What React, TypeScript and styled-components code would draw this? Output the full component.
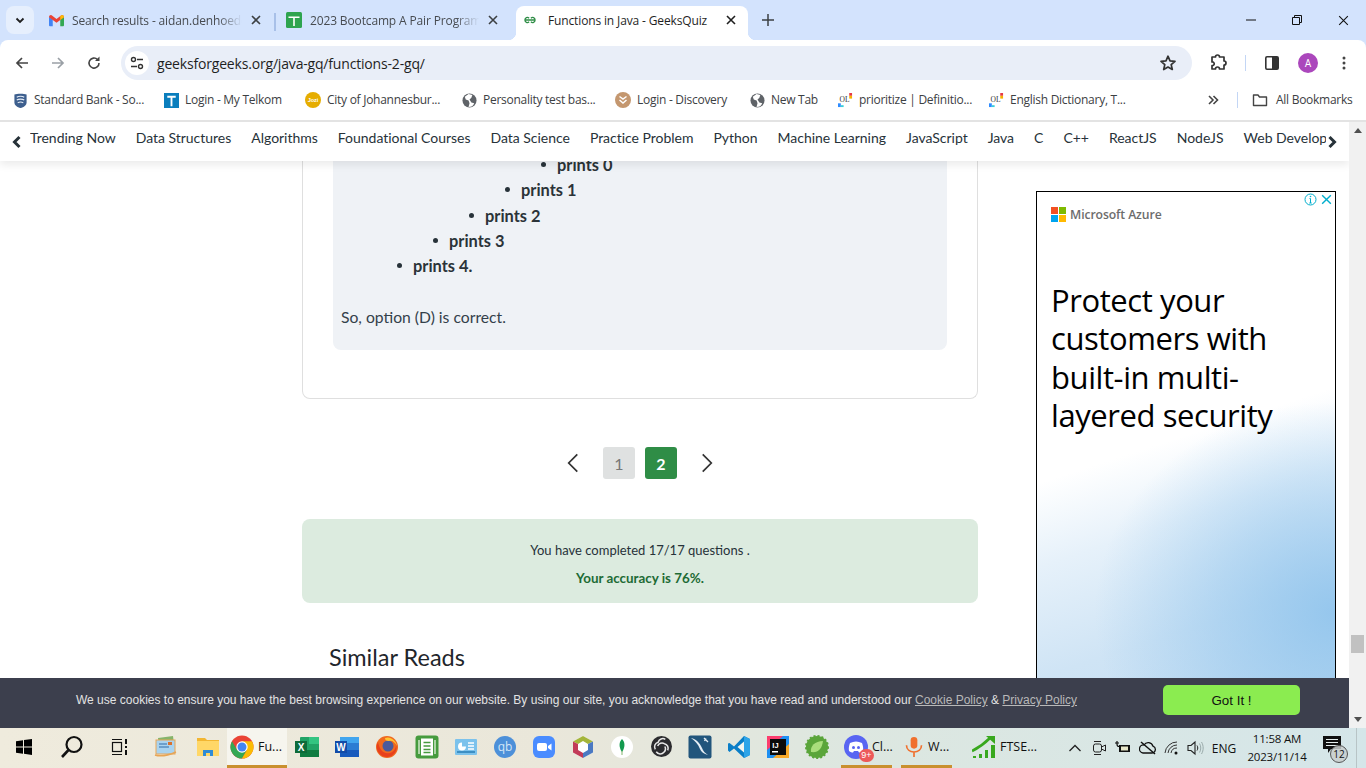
import React from "react";
import styled, { createGlobalStyle } from "styled-components";

const Global = createGlobalStyle`
  html, body { margin: 0; padding: 0; height: 100%; overflow: hidden; background: #fff; }
  #root { height: 100%; }
  * { box-sizing: border-box; }
`;

const Shell = styled.div`
  width: 1366px; height: 768px; display: flex; flex-direction: column; overflow: hidden;
  font-family: "Roboto", "Liberation Sans", sans-serif; color: #1f1f1f;
`;

/* ---------- tab strip ---------- */
const TabStrip = styled.div`
  height: 40px; flex: none; background: #d3e3fd; display: flex; align-items: flex-end; padding-left: 6px;
`;
const TabMenu = styled.div`
  width: 28px; height: 28px; margin: 0 6px 6px 0; border-radius: 8px; background: #e6effd;
  display: flex; align-items: center; justify-content: center;
`;
const Tab = styled.div<{ $w: number; $active?: boolean; $pad: number; $gap: number; $pr: number }>`
  position: relative; width: ${p => p.$w}px; height: 34px; display: flex; align-items: center;
  padding: 0 ${p => p.$pr}px 6px ${p => p.$pad}px; gap: ${p => p.$gap}px; border-radius: 8px 8px 0 0;
  background: ${p => (p.$active ? "#fff" : "transparent")};
  ${p => p.$active && `
    &::before, &::after { content: ""; position: absolute; bottom: 0; width: 8px; height: 8px; }
    &::before { left: -8px; background: radial-gradient(circle at 0 0, #d3e3fd 8px, #fff 8.5px); }
    &::after { right: -8px; background: radial-gradient(circle at 100% 0, #d3e3fd 8px, #fff 8.5px); }
  `}
`;
const TabTitle = styled.div<{ $fade?: boolean }>`
  flex: 1; min-width: 0; white-space: nowrap; overflow: hidden; font-size: 12px; color: ${p => (p.$fade ? "#474b50" : "#1f1f1f")};
  font-family: "Open Sans", sans-serif; letter-spacing: -0.14px;
  ${p => p.$fade && `mask-image: linear-gradient(90deg, #000 86%, transparent 100%);`}
`;
const TabDivider = styled.div`
  width: 2px; height: 18px; background: #a8c0e8; margin: 0 1px 9px 0; flex: none;
`;
const NewTab = styled.div`
  width: 20px; height: 34px; margin-left: 10px; padding-bottom: 6px; display: flex; align-items: center; justify-content: center;
`;
const WindowControls = styled.div`
  margin-left: auto; display: flex; height: 40px;
`;
const WindowButton = styled.div`
  width: 46px; display: flex; align-items: center; justify-content: center;
`;

/* ---------- toolbar ---------- */
const Backdrop = styled.div`
  background: #d3e3fd; flex: none;
`;
const Toolbar = styled.div`
  height: 40px; background: #fff; display: flex; align-items: flex-start; padding: 6px 4px 0; border-radius: 8px 8px 0 0;
`;
const ToolButton = styled.div`
  width: 36px; height: 34px; flex: none; display: flex; align-items: center; justify-content: center;
`;
const Omnibox = styled.div`
  flex: 1; height: 34px; margin: 0 8px 0 9px; border-radius: 17px; background: #e9eef8;
  display: flex; align-items: center; padding: 0 15px 0 4px;
`;
const SiteChip = styled.div`
  width: 24px; height: 24px; border-radius: 50%; background: #fff; display: flex; align-items: center; justify-content: center;
`;
const Url = styled.div`
  flex: 1; margin-left: 8px; font-size: 14px; font-family: "Open Sans", sans-serif; letter-spacing: -0.18px; color: #1f1f1f;
`;
const ToolDivider = styled.div`
  width: 1px; height: 16px; background: #c3d6f5; margin: 9px 8px 0 9px; flex: none;
`;
const Avatar = styled.div`
  width: 20px; height: 20px; border-radius: 50%; background: #ab47bc; color: #fff; font-size: 10px;
  display: flex; align-items: center; justify-content: center;
`;

/* ---------- bookmarks ---------- */
const Bookmarks = styled.div`
  height: 42px; flex: none; background: #fff; border-bottom: 2px solid #e3e3e3; display: flex; align-items: center;
  padding: 0 14px 0 13px; gap: 19px; font-size: 12px; color: #3c4043;
`;
const Bookmark = styled.div<{ $gap?: number }>`
  display: flex; align-items: center; gap: ${p => p.$gap ?? 6}px; white-space: nowrap;
`;
const BookmarkLabel = styled.span<{ $w: number }>`
  display: block; width: ${p => p.$w}px; padding-bottom: 2px; font-family: "Open Sans", sans-serif; font-size: 12px; letter-spacing: -0.27px; white-space: nowrap;
`;
const BookmarkEnd = styled.div`
  margin-left: auto; display: flex; align-items: center;
`;
const MoreMark = styled.div`
  width: 16px; display: flex; justify-content: center; margin-right: 16px;
`;
const BookmarkDivider = styled.div`
  width: 1px; height: 16px; background: #c3d6f5; margin-right: 14px;
`;

/* ---------- page ---------- */
const Viewport = styled.div`
  position: relative; flex: 1; min-height: 0; display: flex; background: #fff;
`;
const PageArea = styled.div`
  flex: 1; min-width: 0; display: flex; flex-direction: column; overflow: hidden;
`;
const SiteNav = styled.nav`
  position: relative; z-index: 2; flex: none; height: 39px; background: #fff; display: flex; align-items: center;
  padding-left: 10px; box-shadow: 0 4px 8px rgba(0, 0, 0, 0.08); overflow: hidden;
  font-family: "Lato", sans-serif; font-size: 14px; color: #273239;
`;
const NavArrow = styled.div<{ $right?: boolean }>`
  flex: none; width: 14px; height: 16px; display: flex; align-items: center; justify-content: center; margin-right: 6px;
  ${p => p.$right && `position: absolute; right: 10px; top: 12px; margin: 0;`}
`;
const NavItems = styled.div`
  display: flex; gap: 20px; white-space: nowrap; width: 1296px; overflow: hidden; padding-bottom: 9px;
`;
const NavItem = styled.span`
  flex: none; letter-spacing: -0.02px;
`;
const Content = styled.div`
  flex: 1; min-height: 0; display: flex; padding-left: 302px; overflow: hidden;
`;
const MainColumn = styled.div`
  width: 676px; flex: none; display: flex; flex-direction: column;
`;
const QuestionCard = styled.section`
  height: 238px; flex: none; border: 1px solid #dfdfdf; border-top: none; border-radius: 0 0 8px 8px; padding: 0 30px;
`;
const Explanation = styled.div`
  display: flow-root; height: 189px; background: #eff2f6; border-radius: 0 0 8px 8px; padding: 0 8px;
  font-family: "Lato", sans-serif; font-size: 16px; color: #273239;
`;
const Bullets = styled.ul<{ $top?: boolean }>`
  margin: 0; padding: 0 0 0 36px; list-style: none;
  ${p => p.$top && `padding-left: 72px; margin-top: -9px; height: 126.5px;`}
`;
const Bullet = styled.li`
  position: relative; height: 25.3px; line-height: 25.3px; font-weight: 700; font-size: 16.4px; color: #2b3338;
  &::before { content: ""; position: absolute; left: -16.5px; top: 10px; width: 5px; height: 5px; border-radius: 50%; background: #273239; }
`;
const Verdict = styled.p`
  margin: 27px 0 0; line-height: 22px; font-size: 15.7px; color: #33404a;
`;
const Pager = styled.div`
  display: flex; align-items: center; justify-content: center; height: 32px; margin-top: 48px; flex: none;
`;
const PagerArrow = styled.div`
  width: 50px; height: 32px; display: flex; align-items: center; justify-content: center;
`;
const PageNumber = styled.div<{ $current?: boolean }>`
  width: 32px; height: 32px; margin: 0 5px; border-radius: 3px; display: flex; align-items: center; justify-content: center;
  font-family: "Lato", sans-serif; font-size: 16px; font-weight: ${p => (p.$current ? 700 : 400)};
  background: ${p => (p.$current ? "#2f8d46" : "#dfe1e1")}; color: ${p => (p.$current ? "#fff" : "#777")};
`;
const Score = styled.div`
  margin-top: 40px; height: 84px; flex: none; background: #dcebdf; border-radius: 8px; text-align: center;
  font-family: "Lato", sans-serif; font-size: 13px; color: #273239; padding-top: 22px;
`;
const ScoreLine = styled.div<{ $strong?: boolean }>`
  height: 28px; line-height: 19px;
  ${p => p.$strong && `font-weight: 700; color: #1e6b35; font-size: 13.4px;`}
`;
const SimilarTitle = styled.h2`
  margin: 39px 0 0 27px; font-family: "Lato", sans-serif; font-weight: 400; font-size: 23.5px; line-height: 30px; color: #1f262b;
`;
const AdFrame = styled.aside`
  position: relative; flex: none; width: 300px; height: 600px; margin: 30px 0 0 58px; border: 1px solid #000; padding: 14px 0 0 14px;
  background:
    radial-gradient(ellipse 240px 210px at 100% 420px, rgba(140, 194, 236, 0.85) 0%, rgba(140, 194, 236, 0.45) 50%, rgba(140, 194, 236, 0) 100%),
    linear-gradient(162deg, #fff 0%, #fff 42%, #e6f1fa 54%, #cfe4f5 70%, #bcd9f1 100%);
  font-family: "Open Sans", sans-serif;
`;
const AdChoices = styled.div`
  position: absolute; top: 1px; right: 2px; display: flex; gap: 3px;
`;
const AdBrand = styled.div`
  display: flex; align-items: center; gap: 4px; color: #6c6c6c; font-size: 12.2px; letter-spacing: -0.1px; font-weight: 600;
`;
const AdHeadline = styled.div`
  margin-top: 58px; font-size: 31px; line-height: 38.4px; color: #000; letter-spacing: -0.42px; font-weight: 500;
`;
const CookieBar = styled.div`
  position: absolute; z-index: 3; left: 0; right: 17px; bottom: 0; height: 50px; background: #3c3f4d; display: flex; align-items: center;
  padding: 0 49px 6px 76px; font-family: "Liberation Sans", sans-serif; font-size: 12px; color: #e2e2e2;
`;
const CookieText = styled.div`
  flex: 1; white-space: nowrap;
`;
const CookieLink = styled.span`
  color: #b9b9b9; text-decoration: underline;
`;
const GotIt = styled.div`
  width: 137px; height: 30px; border-radius: 5px; background: #8bec50; color: #111; font-size: 13.33px;
  display: flex; align-items: center; justify-content: center;
`;
const Scrollbar = styled.div`
  width: 17px; flex: none; background: #f1f1f1; display: flex; flex-direction: column; align-items: center; padding-top: 2px;
`;
const ScrollThumb = styled.div`
  width: 13px; height: 18px; background: #c1c1c1; margin-top: 502px;
`;
const ScrollEnd = styled.div<{ $down?: boolean }>`
  width: 0; height: 0; border-left: 4px solid transparent; border-right: 4px solid transparent;
  ${p => (p.$down ? `border-top: 5px solid #505050; margin-top: 64px;` : `border-bottom: 5px solid #505050; margin-top: 4px;`)}
`;

/* ---------- taskbar ---------- */
const Taskbar = styled.div`
  height: 40px; flex: none; display: flex; align-items: stretch;
  background: linear-gradient(90deg, #efebdd 0%, #eae7da 40%, #dde7e0 62%, #d5e6e9 100%);
  font-family: "Open Sans", sans-serif; font-size: 12px; color: #111;
`;
const TaskSlot = styled.div<{ $w: number; $ml?: number; $active?: boolean; $open?: boolean; $left?: boolean }>`
  position: relative; flex: none; width: ${p => p.$w}px; margin-left: ${p => p.$ml ?? 0}px; display: flex; align-items: center; gap: 4px;
  justify-content: ${p => (p.$left ? "flex-start" : "center")}; padding-left: ${p => (p.$left ? 3 : 0)}px;
  background: ${p => (p.$active ? "#f6f5ee" : "transparent")};
  border-bottom: ${p => (p.$active || p.$open ? "3px solid #c9902f" : "3px solid transparent")};
`;
const TaskLabel = styled.span`
  font-size: 12.5px; white-space: nowrap;
`;
const Tray = styled.div`
  margin-left: auto; display: flex; align-items: stretch;
`;
const TraySlot = styled.div<{ $w: number }>`
  width: ${p => p.$w}px; display: flex; align-items: center; justify-content: center; flex: none;
`;
const Clock = styled.div`
  width: 70px; display: flex; flex-direction: column; align-items: center; justify-content: center; gap: 2px; font-size: 11.5px; line-height: 16px; letter-spacing: -0.2px;
`;
const ShowDesktop = styled.div`
  width: 10px; border-left: 1px solid #b8c4c6;
`;
const NotifyWrap = styled.div`
  position: relative; width: 22px; height: 24px;
`;
const NotifyCount = styled.span`
  position: absolute; right: -3px; bottom: -3px; width: 18px; height: 18px; border-radius: 50%; background: rgba(200,205,205,.85);
  border: 1px solid #555; font-size: 10px; display: flex; align-items: center; justify-content: center; color: #111;
`;

/* ---------- drawings ---------- */
const I = ({ s = 24, vb = "0 0 24 24", children }: { s?: number; vb?: string; children: React.ReactNode }) => (
  <svg width={s} height={s} viewBox={vb} fill="none">{children}</svg>
);
const Gmail = () => (
  <I s={15} vb="0 0 16 16">
    <path d="M0 4v9a1 1 0 0 0 1 1h3V7z" fill="#4285f4" />
    <path d="M16 4v9a1 1 0 0 1-1 1h-3V7z" fill="#34a853" />
    <path d="M0 4.500C0 2.500 2 1.500 3.500 2.800L8 6.500l4.500-3.700C14 1.500 16 2.500 16 4.500L12 7.500 8 10.500 4 7.500z" fill="#ea4335" />
    <path d="M12 3.200 12.500 2.800C14 1.500 16 2.500 16 4.500L12 7.500z" fill="#fbbc04" />
  </I>
);
const SheetFav = () => (
  <I s={16} vb="0 0 16 16">
    <rect x="0" y="0" width="16" height="16" rx="1.500" fill="#2ea44f" />
    <path d="M2.500 4.500h11v1.600H8.800V14H7.200V6.100H2.500z" fill="#fff" />
  </I>
);
const GfgFav = () => (
  <I s={12} vb="0 0 16 16">
    <path d="M1 8h14M1.200 8a3.300 3.300 0 0 1 5.600-2.400M14.800 8a3.300 3.300 0 0 0-5.600-2.400M1.200 8a3.300 3.300 0 0 0 5.600 2.400M14.800 8a3.300 3.300 0 0 1-5.600 2.400" stroke="#2f8d46" strokeWidth="1.700" />
  </I>
);
const Cross = ({ s = 12, c = "#3c4043", w = 1.600 }: { s?: number; c?: string; w?: number }) => (
  <I s={s} vb="0 0 12 12"><path d="M2 2l8 8M10 2l-8 8" stroke={c} strokeWidth={w} /></I>
);
const Arrow = ({ c, back }: { c: string; back?: boolean }) => (
  <I s={16} vb="0 0 16 16">
    <path d={back ? "M14 8H3M8 3 3 8l5 5" : "M2 8h11M8 3l5 5-5 5"} stroke={c} strokeWidth="1.700" />
  </I>
);
const Reload = () => (
  <I s={16} vb="0 0 16 16">
    <path d="M13 8a5 5 0 1 1-1.500-3.500" stroke="#444" strokeWidth="1.600" />
    <path d="M13.500 1.500V6H9z" fill="#444" />
  </I>
);
const Tune = () => (
  <I s={16} vb="0 0 16 16">
    <circle cx="4.500" cy="4.500" r="2" stroke="#333" strokeWidth="1.400" />
    <path d="M8 4.500h6M2 11.500h6" stroke="#333" strokeWidth="1.400" />
    <circle cx="11.500" cy="11.500" r="2" stroke="#333" strokeWidth="1.400" />
  </I>
);
const Star = () => (
  <I s={18} vb="0 0 18 18">
    <path d="M9 2.200l2 4.600 5 .5-3.800 3.300 1.100 4.900L9 13l-4.300 2.500 1.100-4.900L2 7.300l5-.5z" stroke="#333" strokeWidth="1.700" strokeLinejoin="round" />
  </I>
);
const Puzzle = () => (
  <I s={18} vb="0 0 18 18">
    <path d="M3 4h3.500a2 2 0 1 1 4 0H15v4a2 2 0 1 1 0 4v4H10.500a2 2 0 0 0-4 0H3v-3.500a1.800 1.800 0 1 0 0-3.500z" stroke="#333" strokeWidth="1.700" strokeLinejoin="round" transform="translate(0 -1)" />
  </I>
);
const SidePanel = () => (
  <I s={16} vb="0 0 16 16">
    <rect x="1.800" y="1.800" width="12.400" height="12.400" rx="1.200" stroke="#333" strokeWidth="1.600" />
    <rect x="8" y="2" width="6" height="12" fill="#333" />
  </I>
);
const Kebab = () => (
  <I s={16} vb="0 0 16 16">
    <circle cx="8" cy="3" r="1.500" fill="#444" /><circle cx="8" cy="8" r="1.500" fill="#444" /><circle cx="8" cy="13" r="1.500" fill="#444" />
  </I>
);
const Bank = () => (
  <I s={15} vb="0 0 16 16">
    <path d="M1.500 1.500C4 .5 12 .5 14.500 1.500V10c0 3-3 5-6.500 6-3.500-1-6.500-3-6.500-6z" fill="#3d5f8e" />
    <path d="M4 4.500c2-1.300 6-1.300 8 0M4 7.500c2-1.300 6-1.300 8 0M5 10.500c2-1.300 4-1.300 6 0" stroke="#e6edf6" strokeWidth="1.100" />
  </I>
);
const Telkom = () => (
  <I s={15} vb="0 0 16 16">
    <rect width="16" height="16" fill="#0a7ebd" />
    <path d="M3.500 3h9v2H9v9H7V5H3.500z" fill="#fff" />
  </I>
);
const Jozi = () => (
  <I s={16} vb="0 0 16 16">
    <circle cx="8" cy="8" r="8" fill="#e6ad00" />
    <text x="8" y="10.200" fontSize="5.500" fontWeight="700" fill="#fff" textAnchor="middle" fontFamily="Liberation Sans">Jozi</text>
  </I>
);
const Globe = () => (
  <I s={15} vb="0 0 16 16">
    <circle cx="8" cy="8" r="7.500" fill="#5f6368" />
    <path d="M7 1 3 4l1 3 3 1 1 3-1 4c3 0 5-1 6-4l-3-1-2-3 2-2 1-3z" fill="#fff" />
  </I>
);
const Discovery = () => (
  <I s={16} vb="0 0 16 16">
    <circle cx="8" cy="8" r="8" fill="#c4976f" />
    <path d="M4.500 4.500 8 7l3.500-2.500M4.500 8 8 11l3.500-3" stroke="#fff" strokeWidth="1.500" />
  </I>
);
const Oxford = () => (
  <I s={15} vb="0 0 16 16">
    <rect x="0" y="11" width="3" height="4" fill="#2f8cff" />
    <rect x="3" y="13" width="3" height="2" fill="#38d0d8" />
    <rect x="12" y="0" width="3" height="3" fill="#e63946" />
    <rect x="12" y="3" width="3" height="3" fill="#f5b301" />
    <text x="7" y="10" fontSize="8" fill="#333" textAnchor="middle" fontFamily="Liberation Serif">OL</text>
  </I>
);
const MoreChevrons = () => (
  <I s={12} vb="0 0 12 12"><path d="M2 2l4 4-4 4M6.500 2l4 4-4 4" stroke="#444" strokeWidth="1.600" /></I>
);
const Folder = () => (
  <I s={16} vb="0 0 16 16"><path d="M1.500 3h4.500l1.500 2h7v8.500h-13z" stroke="#444" strokeWidth="1.400" strokeLinejoin="round" /></I>
);
const Chevron = ({ right, s = 14, c = "#273239", w = 3 }: { right?: boolean; s?: number; c?: string; w?: number }) => (
  <I s={s} vb="0 0 14 14"><path d={right ? "M4.500 2l5 5-5 5" : "M9.500 2l-5 5 5 5"} stroke={c} strokeWidth={w} /></I>
);
const ChevronDown = () => (
  <I s={12} vb="0 0 12 12"><path d="M2.500 4.500 6 8l3.500-3.500" stroke="#1f1f1f" strokeWidth="1.800" /></I>
);
const Windows = () => (
  <I s={16} vb="0 0 16 16"><path d="M0 2.200 7 1.200V7.500H0zM8 1l8-1v7.500H8zM0 8.500h7v6.300l-7-1zM8 8.500h8V16l-8-1.200z" fill="#000" /></I>
);
const Search = () => (
  <I s={24}><circle cx="14" cy="9.500" r="7.500" stroke="#111" strokeWidth="2.200" /><path d="M8.500 15 2 22" stroke="#111" strokeWidth="2.600" /></I>
);
const TaskView = () => (
  <I s={18} vb="0 0 18 18">
    <path d="M1 1.500h10M1 16.500h10" stroke="#111" strokeWidth="1.200" />
    <rect x="1.500" y="4.500" width="9" height="9" stroke="#111" strokeWidth="1.200" />
    <path d="M15 1v5M15 8v2M15 12v5" stroke="#111" strokeWidth="2" />
  </I>
);
const Mail = () => (
  <I s={24}>
    <path d="M4 3 19 1l2 16-15 2z" fill="#86b46a" />
    <rect x="2" y="5" width="19" height="14" fill="#a9d3ef" stroke="#e7a556" strokeWidth="1" />
    <path d="M5 9h8M5 12h10" stroke="#5a8fc0" strokeWidth="1.400" />
    <rect x="14" y="7" width="4" height="3" fill="#d9702e" />
    <path d="M1 20c6 2 14 0 21-3" stroke="#e7a556" strokeWidth="1.500" />
  </I>
);
const Explorer = () => (
  <I s={22} vb="0 0 22 22">
    <path d="M0 2h8l2 2H22v15H0z" fill="#f2b632" />
    <rect y="5" width="22" height="15" fill="#ffd767" />
    <path d="M6 20v-6h10v6h-3v-3H9v3z" fill="#2f8bd6" />
  </I>
);
const Chrome = () => (
  <I s={24}>
    <circle cx="12" cy="12" r="11.500" fill="#ea4335" />
    <path d="M2.040 6.250A11.500 11.500 0 0 0 12 23.500l4.760-8.250H7.240z" fill="#34a853" />
    <path d="M21.960 6.250A11.500 11.500 0 0 1 12 23.500l4.760-8.250L12 6.250z" fill="#fbbc04" />
    <circle cx="12" cy="12" r="5.700" fill="#fff" />
    <circle cx="12" cy="12" r="4.500" fill="#4285f4" />
  </I>
);
const Excel = () => (
  <I s={24}>
    <rect x="5" y="2" width="19" height="20" rx="1" fill="#21a366" />
    <rect x="14" y="2" width="10" height="7" fill="#33c481" />
    <rect x="5" y="15" width="19" height="7" fill="#107c41" />
    <rect x="0" y="6" width="12" height="12" fill="#0e6b3a" />
    <text x="6" y="15.500" fontSize="10" fontWeight="700" fill="#fff" textAnchor="middle" fontFamily="Liberation Sans">X</text>
  </I>
);
const Word = () => (
  <I s={24}>
    <rect x="5" y="2" width="19" height="20" rx="1" fill="#2b7cd3" />
    <rect x="5" y="2" width="19" height="6" fill="#41a5ee" />
    <rect x="5" y="15" width="19" height="7" fill="#185abd" />
    <rect x="0" y="6" width="12" height="12" fill="#124ba8" />
    <text x="6" y="15.500" fontSize="10" fontWeight="700" fill="#fff" textAnchor="middle" fontFamily="Liberation Sans">W</text>
  </I>
);
const Firefox = () => (
  <I s={24}>
    <circle cx="12" cy="12" r="11" fill="#f0691f" />
    <circle cx="13" cy="11" r="5.500" fill="#4a5a9c" />
    <path d="M3 7c1 6 5 13 12 11 3-1 6-4 6-8 2 5-2 12-9 12S-1 14 3 7z" fill="#e8401c" />
    <path d="M10 3c5-2 11 2 12 8-2-4-5-6-8-5-3 0-4-1-4-3z" fill="#ffc533" />
  </I>
);
const Evernote = () => (
  <I s={24}>
    <rect x="0.500" y="0.500" width="23" height="23" rx="3" fill="#469b3e" />
    <rect x="6" y="3.500" width="12" height="17" fill="#fff" />
    <path d="M4 5v14M20 5v14" stroke="#cfe8c9" strokeWidth="1.500" />
    <path d="M8.500 7.500h7M8.500 11h7M8.500 14.500h7M8.500 17.500h7" stroke="#469b3e" strokeWidth="1.600" />
  </I>
);
const Dashboard = () => (
  <I s={24}>
    <rect x="1" y="4" width="22" height="16" rx="1" fill="#7cc2ec" />
    <path d="M8 7.500a4 4 0 1 0 4 4H8z" fill="#fff" />
    <path d="M14 8h6M14 11h6M14 14h6" stroke="#fff" strokeWidth="1.500" />
    <rect x="3" y="16" width="18" height="2" fill="#3d8fc4" />
  </I>
);
const Qb = () => (
  <I s={22} vb="0 0 22 22">
    <circle cx="11" cy="11" r="11" fill="#4d90d9" />
    <text x="11" y="15" fontSize="12" fill="#d5e6f7" textAnchor="middle" fontFamily="Open Sans">qb</text>
  </I>
);
const Zoom = () => (
  <I s={22} vb="0 0 22 22">
    <rect width="22" height="22" rx="6" fill="#4a8cff" />
    <rect x="4" y="7" width="10" height="8" rx="2" fill="#fff" />
    <path d="M15 10l3.500-2.500v7L15 12z" fill="#fff" />
  </I>
);
const Hexa = () => (
  <I s={22} vb="0 0 22 22">
    <path d="M11 0 21 5.500v11L11 22 1 16.500v-11z" fill="#fff" />
    <path d="M11 0 21 5.500 16 8 11 5 6 8 1 5.500z" fill="#a4b53a" />
    <path d="M21 5.500v11L11 22v-5l5-3V8z" fill="#4b79c2" />
    <path d="M1 5.500v11L11 22v-5l-5-3V8z" fill="#c23b58" />
  </I>
);
const Mongo = () => (
  <I s={22} vb="0 0 22 22">
    <circle cx="11" cy="11" r="11" fill="#fff" />
    <path d="M11 3c3 3 3.500 8 0 13-3.500-5-3-10 0-13z" fill="#139a4e" />
    <path d="M11 15v4" stroke="#82b36d" strokeWidth="1" />
  </I>
);
const Obs = () => (
  <I s={21} vb="0 0 22 22">
    <circle cx="11" cy="11" r="11" fill="#2b2b2e" />
    <path d="M15 3.500a5 5 0 0 0-7.500 3 5 5 0 0 0-3 7.500M17.500 15a5 5 0 0 0-3.500-7 5 5 0 0 0-7 2.500M5.500 16.500a5 5 0 0 0 8 .5 5 5 0 0 0 1-6" stroke="#e8e8e8" strokeWidth="1.600" />
  </I>
);
const MySql = () => (
  <I s={24}>
    <rect x="0.500" y="0.500" width="23" height="23" rx="2" fill="#21557c" />
    <path d="M3 3c5 1 9 5 11 10 1 3 3 5 6 7-4-1-7-3-8-6C10 9 7 6 3 3z" fill="#e5eef5" />
    <path d="M16 3l4 4M18 3.500 16.500 6" stroke="#e5eef5" strokeWidth="1.300" />
  </I>
);
const VsCode = () => (
  <I s={24}>
    <path d="M17 1l6 3v16l-6 3-10-9.500-4.500 3.500L1 15.500V8.500L2.500 8 7 11.500z" fill="#0a7ec7" />
    <path d="M17 1l6 3v16l-6 3z" fill="#2ea4e8" />
    <path d="M17 6.500 10.500 12l6.500 5.500z" fill="#f3f5f0" />
  </I>
);
const IntelliJ = () => (
  <I s={22} vb="0 0 22 22">
    <rect width="22" height="22" fill="#1d8ff2" />
    <path d="M0 0h16L0 14z" fill="#fc3d6e" />
    <path d="M22 22H6l16-14z" fill="#f8a928" />
    <rect x="3" y="3" width="16" height="16" fill="#0a0a0a" />
    <text x="8.500" y="11.500" fontSize="7.500" fontWeight="700" fill="#fff" textAnchor="middle" fontFamily="Liberation Sans">IJ</text>
    <rect x="5" y="15" width="6" height="1.500" fill="#fff" />
  </I>
);
const Spring = () => (
  <I s={24}>
    <circle cx="12" cy="12" r="11" fill="#5aa53a" stroke="#5aa53a" strokeWidth="2" strokeDasharray="2 2" />
    <path d="M6 17c-1-6 4-11 12-11-1 8-5 12-12 11z" fill="#a9de7c" />
  </I>
);
const Discord = () => (
  <I s={24}>
    <circle cx="12" cy="12" r="12" fill="#5865f2" />
    <path d="M6 8c4-2 8-2 12 0 1 3 1.500 5 1 8-1.500 1-3 1.500-4 1.500l-1-1.500h-4L9 17.500C8 17.500 6.500 17 5 16c-.5-3 0-5 1-8z" fill="#fff" />
    <circle cx="9.500" cy="12.500" r="1.500" fill="#5865f2" /><circle cx="14.500" cy="12.500" r="1.500" fill="#5865f2" />
  </I>
);
const DiscordWrap = styled.div`
  position: relative; width: 24px; height: 24px; flex: none;
`;
const DiscordBadge = styled.span`
  position: absolute; right: -6px; bottom: -3px; width: 15px; height: 13px; border-radius: 7px; background: #ed5a5a; color: #fff;
  font-family: "Liberation Sans", sans-serif; font-size: 9px; line-height: 13px; text-align: center;
`;
const Mic = () => (
  <I s={20} vb="0 0 20 24">
    <rect x="6" y="0" width="8" height="14" rx="4" fill="#f0702e" />
    <path d="M1 10c0 5 4 8 9 8s9-3 9-8M10 18v6" stroke="#f0702e" strokeWidth="2" />
  </I>
);
const Ftse = () => (
  <I s={24}>
    <path d="M0 16C6 13 12 9 18 3" stroke="#38a81e" strokeWidth="2.600" />
    <path d="M14 1h9v8z" fill="#38a81e" />
    <path d="M1 23h3v-2H1zM7 23h3v-4H7zM13 23h3v-8h-3zM19 23h4V10h-4z" fill="#38a81e" />
  </I>
);
const Up = () => <I s={14} vb="0 0 14 14"><path d="M1.500 10 7 4.500 12.500 10" stroke="#222" strokeWidth="1.300" /></I>;
const Meet = () => (
  <I s={16} vb="0 0 16 16">
    <rect x="2.500" y="4" width="8" height="8" rx="2" stroke="#222" />
    <path d="M10.500 7 14.500 5v6l-4-2M3 1.500h7M3 14.500h7" stroke="#222" />
  </I>
);
const Battery = () => (
  <I s={16} vb="0 0 16 16">
    <rect x="4" y="5" width="11" height="7" fill="#111" />
    <path d="M0 3h4M2 1v3c0 2 1 2.500 2 2.500" stroke="#111" strokeWidth="1.200" />
    <rect x="6" y="6.500" width="7" height="4" fill="#e7e7c9" />
  </I>
);
const NoCloud = () => (
  <I s={18} vb="0 0 18 18">
    <path d="M4 14h9a3.500 3.500 0 0 0 1-6.800A5 5 0 0 0 5 6a4 4 0 0 0-1 8z" stroke="#111" strokeWidth="1.300" />
    <path d="M2 3l14 12" stroke="#111" strokeWidth="1.500" />
  </I>
);
const Wifi = () => (
  <I s={16} vb="0 0 16 16">
    <path d="M1 13A12 12 0 0 1 13 2M4 13a9 9 0 0 1 9-8M7 13a6 6 0 0 1 6-5" stroke="#333" strokeWidth="1" />
    <circle cx="12" cy="13" r="1.500" fill="#111" />
  </I>
);
const Volume = () => (
  <I s={18} vb="0 0 18 18">
    <path d="M2 6.500h3L9 3v12L5 11.500H2z" stroke="#222" strokeWidth="1.100" />
    <path d="M11 6.500c1 1.500 1 3.500 0 5" stroke="#222" />
    <path d="M13.500 4.500c1.700 2.700 1.700 6.300 0 9M15.500 3c2.200 3.600 2.200 8.400 0 12" stroke="#9aa" />
  </I>
);
const Note = () => (
  <I s={18} vb="0 0 18 18">
    <path d="M0 0h18v13H8l-3 4v-4H0z" fill="#111" />
    <path d="M3 3.500h12M3 6.500h12M3 9.500h12" stroke="#e6eeee" />
  </I>
);
const MsLogo = () => (
  <I s={15} vb="0 0 15 15">
    <rect width="7" height="7" fill="#f25022" /><rect x="8" width="7" height="7" fill="#7fba00" />
    <rect y="8" width="7" height="7" fill="#00a4ef" /><rect x="8" y="8" width="7" height="7" fill="#ffb900" />
  </I>
);
const AdInfo = () => (
  <I s={13} vb="0 0 13 13">
    <circle cx="6.500" cy="6.500" r="5.500" stroke="#00aecd" />
    <path d="M6.500 5.500V10M5.300 10h2.400M5.500 5.500h1" stroke="#00aecd" />
    <circle cx="6.500" cy="3.500" r=".8" fill="#00aecd" />
  </I>
);

const navItems = ["Trending Now", "Data Structures", "Algorithms", "Foundational Courses", "Data Science", "Practice Problem", "Python", "Machine Learning", "JavaScript", "Java", "C", "C++", "ReactJS", "NodeJS", "Web Development"];

const bookmarks: [React.ReactNode, string, number][] = [
  [<Bank />, "Standard Bank - So...", 111],
  [<Telkom />, "Login - My Telkom", 101],
  [<Jozi />, "City of Johannesbur...", 116],
  [<Globe />, "Personality test bas...", 113],
  [<Discovery />, "Login - Discovery", 94],
  [<Globe />, "New Tab", 48],
  [<Oxford />, "prioritize | Definitio...", 111],
  [<Oxford />, "English Dictionary, T...", 116],
];

const apps: [React.ReactNode, number][] = [
  [<Excel />, 40], [<Word />, 40], [<Firefox />, 40], [<Evernote />, 40], [<Dashboard />, 38], [<Qb />, 40], [<Zoom />, 38],
  [<Hexa />, 40], [<Mongo />, 38], [<Obs />, 40], [<MySql />, 38], [<VsCode />, 40], [<IntelliJ />, 37], [<Spring />, 42],
];

export default function App() {
  return (
    <Shell>
      <Global />
      <TabStrip>
        <TabMenu><ChevronDown /></TabMenu>
        <Tab $w={234} $pad={9} $gap={8} $pr={12}>
          <Gmail />
          <TabTitle $fade>Search results - aidan.denhoed@gmail.com</TabTitle>
          <Cross />
        </Tab>
        <TabDivider />
        <Tab $w={239} $pad={9} $gap={8} $pr={17}>
          <SheetFav />
          <TabTitle $fade>2023 Bootcamp A Pair Programming</TabTitle>
          <Cross />
        </Tab>
        <Tab $w={232} $active $pad={8} $gap={12} $pr={11}>
          <GfgFav />
          <TabTitle>Functions in Java - GeeksQuiz</TabTitle>
          <Cross c="#1f1f1f" />
        </Tab>
        <NewTab>
          <I s={14} vb="0 0 14 14"><path d="M7 1v12M1 7h12" stroke="#3c4043" strokeWidth="1.500" /></I>
        </NewTab>
        <WindowControls>
          <WindowButton><I s={12} vb="0 0 12 12"><path d="M1 6h10" stroke="#111" /></I></WindowButton>
          <WindowButton><I s={12} vb="0 0 12 12"><path d="M1.500 3.500h7v7h-7zM3.500 3.500v-2h7v7h-2" stroke="#111" /></I></WindowButton>
          <WindowButton><Cross s={13} c="#111" w={1} /></WindowButton>
        </WindowControls>
      </TabStrip>
      <Backdrop>
        <Toolbar>
          <ToolButton><Arrow c="#444" back /></ToolButton>
          <ToolButton><Arrow c="#9aa0a6" /></ToolButton>
          <ToolButton><Reload /></ToolButton>
          <Omnibox>
            <SiteChip><Tune /></SiteChip>
            <Url>geeksforgeeks.org/java-gq/functions-2-gq/</Url>
            <Star />
          </Omnibox>
          <ToolButton><Puzzle /></ToolButton>
          <ToolDivider />
          <ToolButton><SidePanel /></ToolButton>
          <ToolButton><Avatar>A</Avatar></ToolButton>
          <ToolButton><Kebab /></ToolButton>
        </Toolbar>
      </Backdrop>
      <Bookmarks>
        {bookmarks.map(([icon, label, w]) => (
          <Bookmark key={label}>{icon}<BookmarkLabel $w={w}>{label}</BookmarkLabel></Bookmark>
        ))}
        <BookmarkEnd>
          <MoreMark><MoreChevrons /></MoreMark>
          <BookmarkDivider />
          <Bookmark $gap={8}><Folder /><BookmarkLabel $w={76}>All Bookmarks</BookmarkLabel></Bookmark>
        </BookmarkEnd>
      </Bookmarks>
      <Viewport>
        <PageArea>
          <SiteNav>
            <NavArrow><Chevron /></NavArrow>
            <NavItems>
              {navItems.map(n => <NavItem key={n}>{n}</NavItem>)}
            </NavItems>
            <NavArrow $right><Chevron right /></NavArrow>
          </SiteNav>
          <Content>
            <MainColumn>
              <QuestionCard>
                <Explanation>
                  <Bullets $top>
                    <Bullets>
                      <Bullets>
                        <Bullets>
                          <Bullets>
                            <Bullet>prints 0</Bullet>
                          </Bullets>
                          <Bullet>prints 1</Bullet>
                        </Bullets>
                        <Bullet>prints 2</Bullet>
                      </Bullets>
                      <Bullet>prints 3</Bullet>
                    </Bullets>
                    <Bullet>prints 4.</Bullet>
                  </Bullets>
                  <Verdict>So, option (D) is correct.</Verdict>
                </Explanation>
              </QuestionCard>
              <Pager>
                <PagerArrow><Chevron s={24} c="#333" w={1} /></PagerArrow>
                <PageNumber>1</PageNumber>
                <PageNumber $current>2</PageNumber>
                <PagerArrow><Chevron s={24} c="#333" w={1} right /></PagerArrow>
              </Pager>
              <Score>
                <ScoreLine>You have completed 17/17 questions .</ScoreLine>
                <ScoreLine $strong>Your accuracy is 76%.</ScoreLine>
              </Score>
              <SimilarTitle>Similar Reads</SimilarTitle>
            </MainColumn>
            <AdFrame>
              <AdChoices><AdInfo /><Cross s={13} c="#00aecd" w={1.3} /></AdChoices>
              <AdBrand><MsLogo />Microsoft Azure</AdBrand>
              <AdHeadline>Protect your<br />customers with<br />built-in multi-<br />layered security</AdHeadline>
            </AdFrame>
          </Content>
          <CookieBar>
            <CookieText>
              We use cookies to ensure you have the best browsing experience on our website. By using our site, you acknowledge that you have read and understood our <CookieLink>Cookie Policy</CookieLink> &amp; <CookieLink>Privacy Policy</CookieLink>
            </CookieText>
            <GotIt>Got It !</GotIt>
          </CookieBar>
        </PageArea>
        <Scrollbar>
          <ScrollEnd />
          <ScrollThumb />
          <ScrollEnd $down />
        </Scrollbar>
      </Viewport>
      <Taskbar>
        <TaskSlot $w={48}><Windows /></TaskSlot>
        <TaskSlot $w={48}><Search /></TaskSlot>
        <TaskSlot $w={48}><TaskView /></TaskSlot>
        <TaskSlot $w={44}><Mail /></TaskSlot>
        <TaskSlot $w={39}><Explorer /></TaskSlot>
        <TaskSlot $w={60} $active $left><Chrome /><TaskLabel>Fu...</TaskLabel></TaskSlot>
        {apps.map(([icon, w], i) => <TaskSlot key={i} $w={w}>{icon}</TaskSlot>)}
        <TaskSlot $w={51} $ml={3} $open $left>
          <DiscordWrap><Discord /><DiscordBadge>9+</DiscordBadge></DiscordWrap>
          <TaskLabel>Cl...</TaskLabel>
        </TaskSlot>
        <TaskSlot $w={51} $ml={9} $open $left><Mic /><TaskLabel>W...</TaskLabel></TaskSlot>
        <TaskSlot $w={80} $ml={17} $left><Ftse /><TaskLabel>FTSE...</TaskLabel></TaskSlot>
        <Tray>
          <TraySlot $w={24}><Up /></TraySlot>
          <TraySlot $w={24}><Meet /></TraySlot>
          <TraySlot $w={24}><Battery /></TraySlot>
          <TraySlot $w={25}><NoCloud /></TraySlot>
          <TraySlot $w={23}><Wifi /></TraySlot>
          <TraySlot $w={23}><Volume /></TraySlot>
          <TraySlot $w={36}>ENG</TraySlot>
          <Clock><span>11:58 AM</span><span>2023/11/14</span></Clock>
          <TraySlot $w={44}><NotifyWrap><Note /><NotifyCount>12</NotifyCount></NotifyWrap></TraySlot>
          <ShowDesktop />
        </Tray>
      </Taskbar>
    </Shell>
  );
}
